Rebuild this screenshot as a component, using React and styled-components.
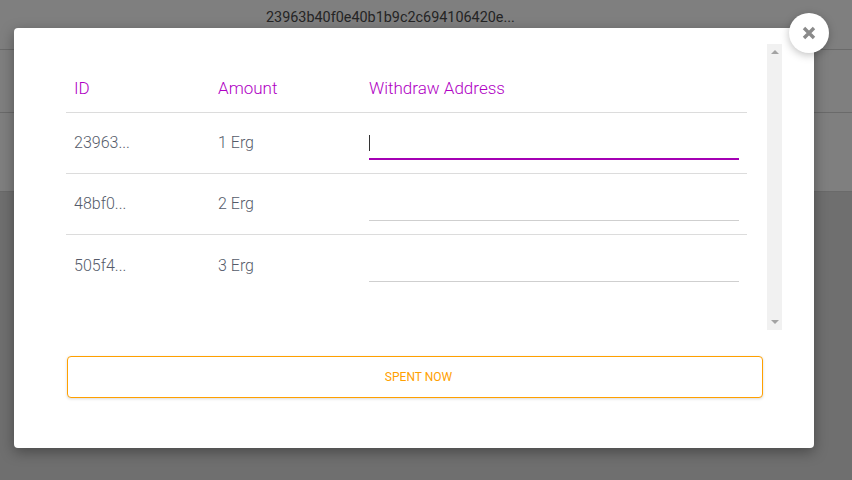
import React from "react";
import styled, { createGlobalStyle } from "styled-components";

const Global = createGlobalStyle`
  html, body { margin: 0; padding: 0; }
  body { width: 852px; height: 480px; overflow: hidden; font-family: Roboto, "Noto Sans", sans-serif; background: #dedede; }
  * { box-sizing: border-box; }
`;

const Page = styled.div`
  position: relative;
  width: 852px;
  height: 480px;
  background: #dedede;
`;

const Band = styled.div`
  height: ${(p) => p.$h}px;
  background: #fff;
  border-bottom: 1px solid #d4d4d4;
  display: flex;
  align-items: flex-start;
  padding: 9px 0 0 266px;
  font-size: 14.4px;
  font-weight: 400;
  color: #4a4a4a;
`;

const Overlay = styled.div`
  position: absolute;
  inset: 0;
  background: rgba(0, 0, 0, 0.5);
`;

const Modal = styled.div`
  position: absolute;
  left: 14px;
  top: 28px;
  width: 800px;
  height: 420px;
  background: #fff;
  border-radius: 4px;
  box-shadow: 0 4px 14px rgba(0, 0, 0, 0.35);
  padding: 16px 32px 0 32px;
  display: flex;
  flex-direction: column;
`;

const CloseBtn = styled.button`
  position: absolute;
  right: -15px;
  top: -15px;
  width: 40px;
  height: 40px;
  border-radius: 50%;
  border: none;
  background: #fff;
  box-shadow: 0 2px 8px rgba(0, 0, 0, 0.25);
  display: flex;
  align-items: center;
  justify-content: center;
  padding: 0;
  cursor: pointer;
`;

const ScrollArea = styled.div`
  height: 286px;
  display: flex;
`;

const Scroll = styled.div`
  flex: 1;
  padding: 20px 20px 0 20px;
  overflow: hidden;
`;

const ScrollBar = styled.div`
  width: 15px;
  background: #f1f1f1;
  display: flex;
  flex-direction: column;
  justify-content: space-between;
  align-items: center;
  padding: 6px 0;
`;

const Arrow = styled.span`
  width: 0;
  height: 0;
  border-left: 4px solid transparent;
  border-right: 4px solid transparent;
  ${(p) => (p.$down ? "border-top: 4px solid #a3a3a3;" : "border-bottom: 4px solid #a3a3a3;")}
`;

const Table = styled.div`
  width: 100%;
`;

const Row = styled.div`
  display: grid;
  grid-template-columns: 144px 151px 1fr;
  height: ${(p) => (p.$head ? 49 : 61)}px;
  border-bottom: ${(p) => (p.$last ? "none" : "1px solid #dcdcdc")};
  align-items: center;
`;

const HeadCell = styled.div`
  padding-left: 8px;
  font-size: 17px;
  font-weight: 300;
  color: #b000c4;
`;

const Cell = styled.div`
  padding-left: 8px;
  padding-bottom: 1px;
  font-size: 16px;
  font-weight: 300;
  color: #555b6a;
`;

const InputCell = styled.div`
  padding: 0 8px 0 8px;
  align-self: start;
  padding-top: 14px;
`;

const Input = styled.div`
  height: 33px;
  border-bottom: ${(p) => (p.$focus ? "2px solid #a400b4" : "1px solid #cfcfcf")};
  position: relative;
`;

const Caret = styled.span`
  position: absolute;
  left: 0;
  top: 8px;
  width: 1px;
  height: 16px;
  background: #333;
`;

const Button = styled.button`
  margin: 26px 19px 0 21px;
  height: 42px;
  border: 1px solid #ffa000;
  border-radius: 4px;
  background: #fff;
  color: #ffa000;
  font-family: Roboto, sans-serif;
  font-size: 12px;
  font-weight: 400;
  padding: 0 0 0 7px;
  box-shadow: 0 1px 3px rgba(0, 0, 0, 0.15);
  text-transform: uppercase;
`;

const rows = [
  { id: "23963...", amount: "1 Erg", focus: true },
  { id: "48bf0...", amount: "2 Erg" },
  { id: "505f4...", amount: "3 Erg" },
];

export default function App() {
  return (
    <Page>
      <Global />
      <Band $h={50}>23963b40f0e40b1b9c2c694106420e...</Band>
      <Band $h={63} />
      <Band $h={79} />
      <Overlay />
      <Modal>
        <CloseBtn aria-label="close">
          <svg width="14" height="14" viewBox="0 0 14 14">
            <path d="M2 2 L12 12 M12 2 L2 12" stroke="#8a8a8a" strokeWidth="3.4" strokeLinecap="butt" />
          </svg>
        </CloseBtn>
        <ScrollArea>
          <Scroll>
            <Table>
              <Row $head>
                <HeadCell>ID</HeadCell>
                <HeadCell>Amount</HeadCell>
                <HeadCell>Withdraw Address</HeadCell>
              </Row>
              {rows.map((r, i) => (
                <Row key={r.id} $last={i === rows.length - 1}>
                  <Cell>{r.id}</Cell>
                  <Cell>{r.amount}</Cell>
                  <InputCell>
                    <Input $focus={r.focus}>{r.focus && <Caret />}</Input>
                  </InputCell>
                </Row>
              ))}
            </Table>
          </Scroll>
          <ScrollBar>
            <Arrow />
            <Arrow $down />
          </ScrollBar>
        </ScrollArea>
        <Button>Spent Now</Button>
      </Modal>
    </Page>
  );
}
